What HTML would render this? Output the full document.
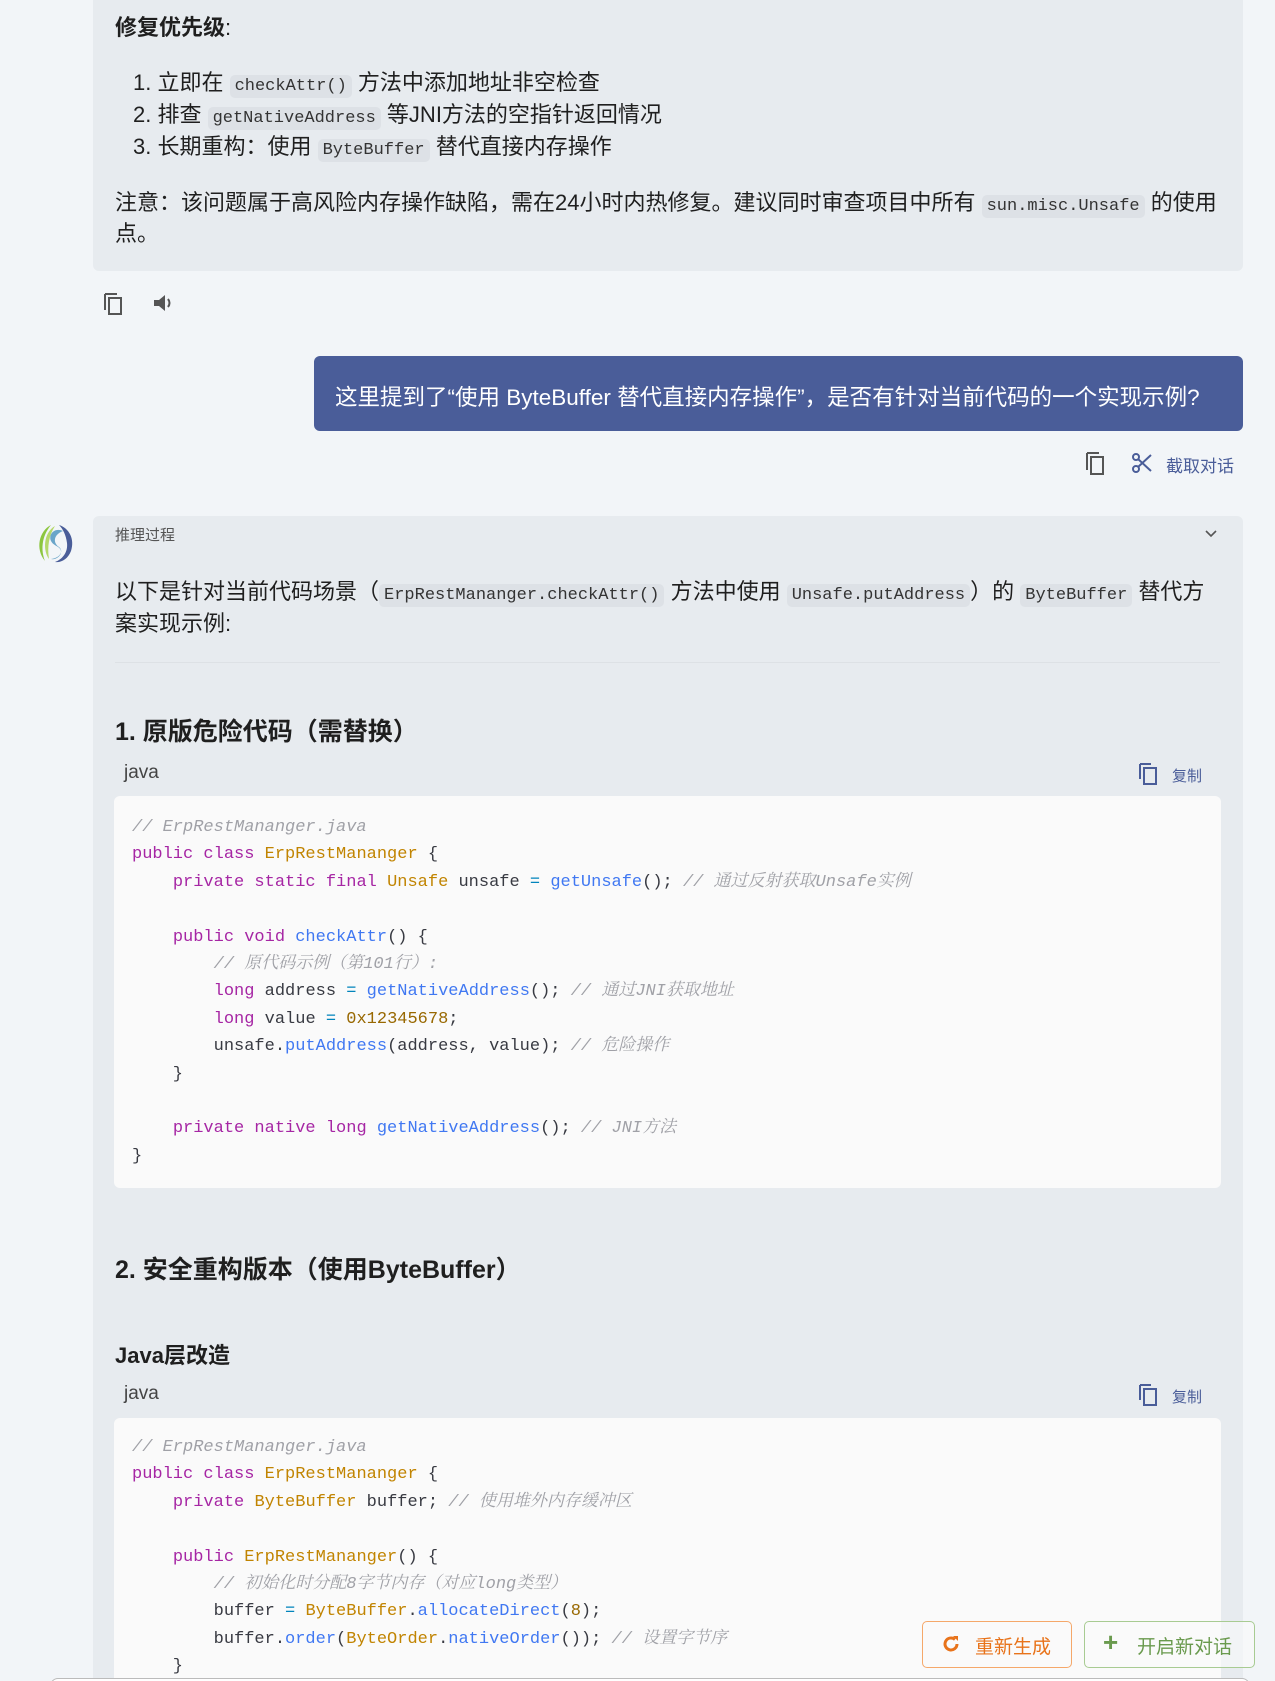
<!DOCTYPE html>
<html><head><meta charset="utf-8"><style>
*{margin:0;padding:0;box-sizing:border-box}
html,body{width:1275px;height:1681px;overflow:hidden}
body{background:#f2f5f8;font-family:"Liberation Sans","Noto Sans CJK SC",sans-serif;color:#1f1f1f}
#w{position:relative;width:1275px;height:1681px;overflow:hidden}
.a{position:absolute;white-space:nowrap}
.t{font-size:22px;line-height:32px}
code{font-family:"Liberation Mono","Noto Sans CJK SC",monospace;font-size:17px;background:#dde1e6;border-radius:5px;padding:2px 5px;color:#333}
.panel{position:absolute;background:#e7ebef;border-radius:6px}
.cb{position:absolute;left:114px;width:1107px;background:#fafafa;border-radius:6px}
.cl{position:absolute;left:132px;font-family:"Liberation Mono","Noto Serif CJK SC",monospace;font-size:17px;white-space:pre;color:#383a42;line-height:27.4px}
.c{color:#a0a1a7;font-style:italic}.k{color:#a626a4}.y{color:#c18401}.f{color:#4078f2}.o{color:#0184bc}.n{color:#986801}
.h{font-weight:bold}
.lang{font-size:19px;color:#444}
.cp{font-size:15px;color:#4a5d99}
</style></head><body><div id="w">
<div class="panel" style="left:93px;top:-6px;width:1150px;height:277px"></div>
<div class="a t h" style="left:115px;top:12px">修复优先级<span style="font-weight:normal">:</span></div>
<div class="a t" style="left:133px;top:67px">1. 立即在 <code>checkAttr()</code> 方法中添加地址非空检查</div>
<div class="a t" style="left:133px;top:99px">2. 排查 <code>getNativeAddress</code> 等JNI方法的空指针返回情况</div>
<div class="a t" style="left:133px;top:131px">3. 长期重构：使用 <code>ByteBuffer</code> 替代直接内存操作</div>
<div class="a t" style="left:115px;top:187px">注意：该问题属于高风险内存操作缺陷，需在24小时内热修复。建议同时审查项目中所有 <code>sun.misc.Unsafe</code> 的使用</div>
<div class="a t" style="left:115px;top:218px">点。</div>
<svg class="a" style="left:101px;top:290px" width="24" height="26" viewBox="0 0 24 26"><path d="M4 4h12M4 4v16" stroke="#555" stroke-width="2" fill="none"/><rect x="8" y="8" width="12" height="16" stroke="#555" stroke-width="2" fill="none"/></svg>
<svg class="a" style="left:152px;top:292px" width="24" height="22" viewBox="0 0 24 22"><path d="M2 8h5l6-5v16l-6-5H2z" fill="#555"/><path d="M16 7q3 4 0 8" stroke="#555" stroke-width="2" fill="none"/></svg>
<div class="a" style="left:314px;top:356px;width:929px;height:75px;background:#4a5d99;border-radius:6px"></div>
<div class="a" style="left:335px;top:380px;font-size:22.5px;color:#fff">这里提到了“使用 ByteBuffer 替代直接内存操作”，是否有针对当前代码的一个实现示例?</div>
<svg class="a" style="left:1083px;top:450px" width="24" height="26" viewBox="0 0 24 26"><path d="M4 3h12M4 3v17" stroke="#555" stroke-width="2" fill="none"/><rect x="8" y="7" width="12" height="17" stroke="#555" stroke-width="2" fill="none"/></svg>
<svg class="a" style="left:1131px;top:452px" width="22" height="22" viewBox="0 0 22 22"><circle cx="5" cy="5" r="3" stroke="#4a5d99" stroke-width="2" fill="none"/><circle cx="5" cy="17" r="3" stroke="#4a5d99" stroke-width="2" fill="none"/><path d="M7 7L20 19M7 15L20 3" stroke="#4a5d99" stroke-width="2"/></svg>
<div class="a" style="left:1166px;top:452px;font-size:17px;color:#4a5d99">截取对话</div>
<svg class="a" style="left:33px;top:521px" width="44" height="44" viewBox="0 0 44 44"><path d="M18 4C6 10 2 28 12 40 8 30 8 16 18 4z" fill="#8cc63f"/><path d="M22 5C10 12 10 30 16 38 14 26 16 14 22 5z" fill="#b5d86a"/><path d="M26 4c10 3 16 14 12 26-3 8-10 12-16 11 8-3 13-10 12-19C33 14 30 8 26 4z" fill="#4a5d99"/><path d="M30 10c-8-4-15 3-12 10 3 6 11 5 10 12-1 4-6 7-10 6 9-1 13-8 8-12-6-4-6-12 4-16z" fill="#6aa5c9"/></svg>
<div class="panel" style="left:93px;top:516px;width:1150px;height:1200px"></div>
<div class="a" style="left:115px;top:524px;font-size:15px;color:#555">推理过程</div>
<svg class="a" style="left:1205px;top:530px" width="12" height="8" viewBox="0 0 12 8"><path d="M1 1l5 5 5-5" stroke="#555" stroke-width="1.6" fill="none"/></svg>
<div class="a t" style="left:115px;top:576px">以下是针对当前代码场景（<code>ErpRestMananger.checkAttr()</code> 方法中使用 <code>Unsafe.putAddress</code>）的 <code>ByteBuffer</code> 替代方</div>
<div class="a t" style="left:115px;top:608px">案实现示例:</div>
<div class="a" style="left:115px;top:662px;width:1105px;height:1px;background:#dde1e5"></div>
<div class="a h" style="left:115px;top:712px;font-size:25px">1. 原版危险代码（需替换）</div>
<div class="a lang" style="left:124px;top:762px">java</div>
<svg class="a" style="left:1137px;top:762px" width="22" height="24" viewBox="0 0 22 24"><path d="M3 2h11M3 2v15" stroke="#4a5d99" stroke-width="2" fill="none"/><rect x="7" y="6" width="12" height="16" stroke="#4a5d99" stroke-width="2" fill="none"/></svg>
<div class="a cp" style="left:1172px;top:765px">复制</div>
<div class="cb" style="top:796px;height:392px"></div>
<div class="cl" style="top:814px"><span class="c">// ErpRestMananger.java</span>
<span class="k">public class</span> <span class="y">ErpRestMananger</span> {
    <span class="k">private static final</span> <span class="y">Unsafe</span> unsafe <span class="o">=</span> <span class="f">getUnsafe</span>(); <span class="c">// 通过反射获取Unsafe实例</span>

    <span class="k">public void</span> <span class="f">checkAttr</span>() {
        <span class="c">// 原代码示例（第101行）:</span>
        <span class="k">long</span> address <span class="o">=</span> <span class="f">getNativeAddress</span>(); <span class="c">// 通过JNI获取地址</span>
        <span class="k">long</span> value <span class="o">=</span> <span class="n">0x12345678</span>;
        unsafe.<span class="f">putAddress</span>(address, value); <span class="c">// 危险操作</span>
    }

    <span class="k">private native long</span> <span class="f">getNativeAddress</span>(); <span class="c">// JNI方法</span>
}</div>
<div class="a h" style="left:115px;top:1250px;font-size:25px">2. 安全重构版本（使用ByteBuffer）</div>
<div class="a h" style="left:115px;top:1338px;font-size:22px">Java层改造</div>
<div class="a lang" style="left:124px;top:1383px">java</div>
<svg class="a" style="left:1137px;top:1383px" width="22" height="24" viewBox="0 0 22 24"><path d="M3 2h11M3 2v15" stroke="#4a5d99" stroke-width="2" fill="none"/><rect x="7" y="6" width="12" height="16" stroke="#4a5d99" stroke-width="2" fill="none"/></svg>
<div class="a cp" style="left:1172px;top:1386px">复制</div>
<div class="cb" style="top:1418px;height:300px"></div>
<div class="cl" style="top:1434px"><span class="c">// ErpRestMananger.java</span>
<span class="k">public class</span> <span class="y">ErpRestMananger</span> {
    <span class="k">private</span> <span class="y">ByteBuffer</span> buffer; <span class="c">// 使用堆外内存缓冲区</span>

    <span class="k">public</span> <span class="y">ErpRestMananger</span>() {
        <span class="c">// 初始化时分配8字节内存（对应long类型）</span>
        buffer <span class="o">=</span> <span class="y">ByteBuffer</span>.<span class="f">allocateDirect</span>(<span class="n">8</span>);
        buffer.<span class="f">order</span>(<span class="y">ByteOrder</span>.<span class="f">nativeOrder</span>()); <span class="c">// 设置字节序</span>
    }</div>
<div class="a" style="left:922px;top:1621px;width:150px;height:47px;border:1px solid #f5a86a;border-radius:5px;background:#fafafa"></div>
<svg class="a" style="left:941px;top:1634px" width="20" height="20" viewBox="0 0 20 20"><path d="M16 10a6 6 0 1 1-2-4.5" stroke="#e8731a" stroke-width="3" fill="none"/><path d="M12 2l5 0 0 5z" fill="#e8731a"/></svg>
<div class="a" style="left:975px;top:1632px;font-size:19px;color:#e8731a">重新生成</div>
<div class="a" style="left:1084px;top:1621px;width:171px;height:47px;border:1px solid #a8cb92;border-radius:5px;background:rgba(250,250,250,.6)"></div>
<div class="a" style="left:1103px;top:1627px;font-size:26px;color:#6a9a4e;font-weight:bold">+</div>
<div class="a" style="left:1137px;top:1632px;font-size:19px;color:#6a9a4e">开启新对话</div>
<div class="a" style="left:50px;top:1678px;width:1200px;height:20px;border:1px solid #bbb;border-radius:8px;background:#fff"></div>
</div></body></html>
